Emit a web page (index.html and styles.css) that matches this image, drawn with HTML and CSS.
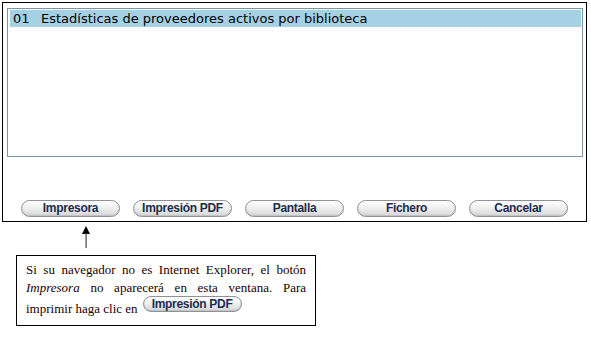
FILE: index.html
```html
<!DOCTYPE html>
<html lang="es">
<head>
    <meta charset="UTF-8">
    <title>Informes</title>
    <link rel="stylesheet" href="styles.css">
</head>
<body>
    <div class="window">
        <div class="listbox">
            <div class="item selected"><span class="code">01</span>Estadísticas de proveedores activos por biblioteca</div>
        </div>
        <div class="buttons">
            <button class="btn">Impresora</button>
            <button class="btn">Impresión PDF</button>
            <button class="btn">Pantalla</button>
            <button class="btn">Fichero</button>
            <button class="btn">Cancelar</button>
        </div>
    </div>

    <div class="pointer">
        <svg width="12" height="22" viewBox="0 0 12 22">
            <path d="M6 0 L10 8 L2 8 Z" fill="#000"/>
            <rect x="5.5" y="7" width="1.2" height="15" fill="#444"/>
        </svg>
    </div>

    <div class="note">
        <p class="note-text">Si su navegador no es Internet Explorer, el botón <i>Impresora</i> no aparecerá en esta ventana. Para</p>
        <p class="note-last">imprimir haga clic en <span class="btn btn-inline">Impresión PDF</span></p>
    </div>
</body>
</html>
```

FILE: styles.css
```css
body {
    margin: 0;
    padding: 0;
    background-color: #fff;
    font-family: 'DejaVu Sans', Verdana, sans-serif;
}
.window {
    margin: 2px 0 0 2px;
    width: 583px;
    height: 218px;
    border: 1px solid #000;
    display: flex;
    flex-direction: column;
}
.listbox {
    margin: 5px 3px 0 4px;
    height: 146px;
    border: 1px solid #7a96a8;
    padding: 1px 1px 0 2px;
}
.item {
    height: 17px;
    line-height: 17px;
    font-size: 13px;
    color: #000;
    padding-left: 3px;
}
.item.selected {
    background-color: #a6d1e5;
}
.code {
    display: inline-block;
    width: 28px;
}
.buttons {
    display: flex;
    gap: 13px;
    margin: 43px 0 0 18px;
}
.btn {
    width: 99px;
    height: 17px;
    padding: 0;
    border: 1px solid #8e9296;
    border-radius: 9px;
    background: linear-gradient(#ffffff 0%, #f0f0f0 45%, #d6d6d6 100%);
    box-shadow: inset 0 -1px 1px #bfc3c6;
    font-family: 'Liberation Sans', Arial, sans-serif;
    font-size: 12px;
    font-weight: bold;
    letter-spacing: -0.3px;
    color: #1d2c4c;
    text-align: center;
    line-height: 15px;
}
.pointer {
    margin: 4px 0 0 80px;
    height: 22px;
}
.pointer svg {
    display: block;
}
.note {
    margin: 7px 0 0 16px;
    width: 280px;
    height: 64px;
    border: 1px solid #000;
    padding: 5px 9px 0 9px;
    font-family: 'Liberation Serif', 'Times New Roman', serif;
    font-size: 13px;
    line-height: 18px;
    color: #200000;
}
.note-text {
    margin: 0;
    text-align: justify;
    text-align-last: justify;
}
.note-last {
    margin: -2px 0 0 0;
    height: 23px;
    display: flex;
    align-items: flex-end;
    gap: 5px;
}
.btn-inline {
    display: block;
    box-sizing: border-box;
    height: 16px;
    line-height: 14px;
    margin-bottom: 6px;
}
```
